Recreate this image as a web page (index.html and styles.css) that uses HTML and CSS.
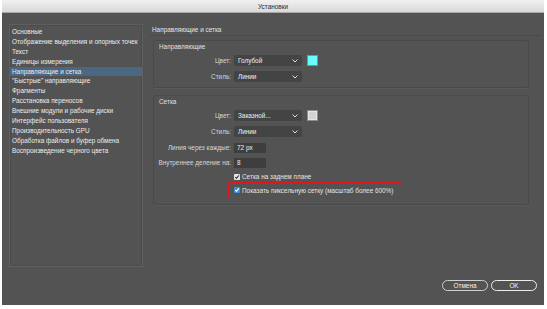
FILE: index.html
```html
<!doctype html>
<html lang="ru">
<head>
    <meta charset="UTF-8">
    <title>Установки</title>
    <link rel="stylesheet" href="styles.css">
</head>
<body>
    <div class="window">
        <div class="titlebar">Установки</div>
        <div class="main">
            <ul class="sidebar">
                <li>Основные</li>
                <li>Отображение выделения и опорных точек</li>
                <li>Текст</li>
                <li>Единицы измерения</li>
                <li class="active">Направляющие и сетка</li>
                <li>"Быстрые" направляющие</li>
                <li>Фрагменты</li>
                <li>Расстановка переносов</li>
                <li>Внешние модули и рабочие диски</li>
                <li>Интерфейс пользователя</li>
                <li>Производительность GPU</li>
                <li>Обработка файлов и буфер обмена</li>
                <li>Воспроизведение черного цвета</li>
            </ul>
            <div class="pane">
                <div class="heading">Направляющие и сетка</div>

                <div class="group">
                    <div class="group-title">Направляющие</div>
                    <div class="row first">
                        <span class="label">Цвет:</span>
                        <div class="select">Голубой<svg width="6" height="4" viewBox="0 0 6 4"><polyline points="0.5,0.5 3,3 5.5,0.5" fill="none" stroke="#d8d8d8" stroke-width="1"/></svg></div>
                        <span class="swatch cyan"></span>
                    </div>
                    <div class="row">
                        <span class="label">Стиль:</span>
                        <div class="select">Линии<svg width="6" height="4" viewBox="0 0 6 4"><polyline points="0.5,0.5 3,3 5.5,0.5" fill="none" stroke="#d8d8d8" stroke-width="1"/></svg></div>
                    </div>
                </div>

                <div class="group grid">
                    <div class="group-title">Сетка</div>
                    <div class="row first">
                        <span class="label">Цвет:</span>
                        <div class="select">Заказной...<svg width="6" height="4" viewBox="0 0 6 4"><polyline points="0.5,0.5 3,3 5.5,0.5" fill="none" stroke="#d8d8d8" stroke-width="1"/></svg></div>
                        <span class="swatch gray"></span>
                    </div>
                    <div class="row">
                        <span class="label">Стиль:</span>
                        <div class="select">Линии<svg width="6" height="4" viewBox="0 0 6 4"><polyline points="0.5,0.5 3,3 5.5,0.5" fill="none" stroke="#d8d8d8" stroke-width="1"/></svg></div>
                    </div>
                    <div class="row">
                        <span class="label">Линия через каждые:</span>
                        <div class="input">72 px</div>
                    </div>
                    <div class="row tight">
                        <span class="label">Внутреннее деление на:</span>
                        <div class="input">8</div>
                    </div>
                    <div class="check">
                        <span class="box"><svg width="6" height="6" viewBox="0 0 6 6"><polyline points="1.2,3 2.5,4.4 4.9,1.4" fill="none" stroke="#333" stroke-width="1.1"/></svg></span>
                        <span>Сетка на заднем плане</span>
                    </div>
                    <div class="check marked">
                        <span class="box blue"><svg width="6" height="6" viewBox="0 0 6 6"><polyline points="1.2,3 2.5,4.4 4.9,1.4" fill="none" stroke="#fff" stroke-width="1.1"/></svg></span>
                        <span>Показать пиксельную сетку (масштаб более 600%)</span>
                    </div>
                </div>

                <div class="buttons">
                    <div class="btn">Отмена</div>
                    <div class="btn default">OK</div>
                </div>
            </div>
        </div>
    </div>
</body>
</html>
```
FILE: styles.css
```css
body{
    margin: 0;
    background-color: #ffffff;
    font-family: "Liberation Sans", Arial, sans-serif;
    font-size: 6.4px;
}
.window{
    margin-left: 2px;
    width: 542px;
    height: 305px;
    background-color: #535353;
    display: flex;
    flex-direction: column;
}
.titlebar{
    height: 12px;
    line-height: 13px;
    text-align: center;
    color: #2b2b2b;
    background: linear-gradient(#f0f0f0, #d9d9d9);
    border-bottom: 1px solid #a9a9a9;
}
.main{
    display: flex;
    flex: 1;
}
.sidebar{
    list-style: none;
    margin: 11px 0 0 7px;
    padding: 2px 0 0 0;
    width: 134px;
    height: 243px;
    box-sizing: border-box;
    border: 1px solid #5f5f5f;
    box-shadow: inset 0 0 0 1px #4c4c4c;
}
.sidebar li{
    line-height: 9.9px;
    height: 9.9px;
    padding-left: 2px;
    color: #ececec;
    white-space: nowrap;
}
.sidebar li.active{
    background-color: #4b6784;
}
.pane{
    margin-left: 7px;
    width: 390px;
    padding-top: 12px;
    display: flex;
    flex-direction: column;
}
.heading{
    line-height: 10px;
    padding-left: 2px;
    color: #e4e4e4;
    border-bottom: 1px solid #4a4a4a;
}
.group{
    margin: 4px 11px 0 3px;
    padding: 1px 0 5px 4px;
    border: 1px solid #4a4a4a;
    border-radius: 2px;
    box-shadow: 0 1px 0 #5a5a5a;
}
.group.grid{
    margin-top: 7px;
    padding-bottom: 6px;
}
.group-title{
    line-height: 9px;
    padding-left: 1px;
    color: #e0e0e0;
}
.row{
    display: flex;
    align-items: center;
    height: 11px;
    margin-top: 5px;
}
.row.first{
    margin-top: 4px;
}
.row.tight{
    margin-top: 4px;
}
.label{
    width: 73px;
    margin-right: 3px;
    text-align: right;
    color: #d6d6d6;
    white-space: nowrap;
}
.select{
    width: 68px;
    height: 11px;
    box-sizing: border-box;
    padding: 0 4px 0 4px;
    background-color: #444444;
    border-radius: 2px;
    color: #f0f0f0;
    display: flex;
    align-items: center;
    justify-content: space-between;
}
.swatch{
    margin-left: 5px;
    width: 11px;
    height: 11px;
    box-sizing: border-box;
    border: 1px solid #8d8d8d;
}
.swatch.cyan{
    background-color: #66ffff;
}
.swatch.gray{
    background-color: #d3d3d3;
    box-shadow: inset 0 0 0 1px #e6e6e6;
}
.input{
    width: 32px;
    height: 10px;
    line-height: 10px;
    box-sizing: border-box;
    padding-left: 3px;
    background-color: #3e3e3e;
    color: #f0f0f0;
}
.check{
    display: flex;
    align-items: center;
    gap: 2px;
    height: 9px;
    margin: 4px 0 0 76px;
    color: #e4e4e4;
    white-space: nowrap;
}
.check.marked{
    margin: 1px 0 0 70px;
    width: 174px;
    height: 16px;
    box-sizing: border-box;
    padding-left: 5px;
    border: 1.5px solid #e0161e;
}
.box{
    width: 6px;
    height: 6px;
    border-radius: 1px;
    background-color: #e8e8e8;
    display: flex;
}
.box.blue{
    background-color: #3d8fe0;
}
.buttons{
    margin-top: auto;
    margin-bottom: 14px;
    margin-right: 3px;
    display: flex;
    justify-content: flex-end;
    gap: 3px;
}
.btn{
    width: 46px;
    height: 11px;
    line-height: 9px;
    box-sizing: border-box;
    text-align: center;
    border: 1px solid #cfcfcf;
    border-radius: 6px;
    color: #f2f2f2;
}
.btn.default{
    border: 1.5px solid #ededed;
}
```
